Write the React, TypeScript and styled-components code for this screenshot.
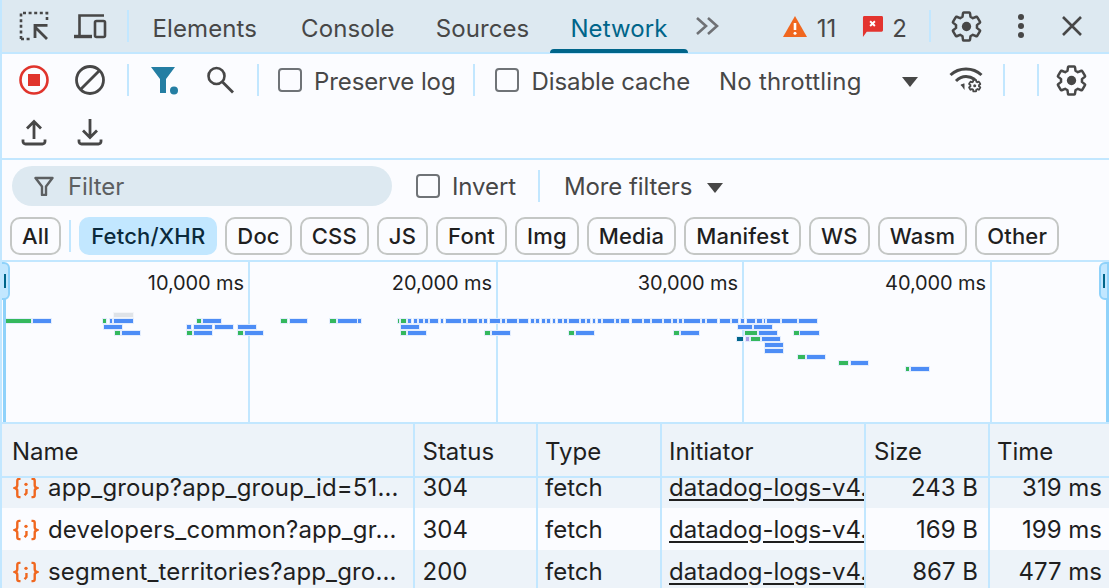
import React from "react";
import styled, { createGlobalStyle } from "styled-components";

const line = "#c2e7ff";
const tone = "#dde9f1";
const paper = "#fbfcff";
const ink = "#474747";

const Global = createGlobalStyle`
  html, body { margin: 0; padding: 0; width: 1109px; height: 588px; overflow: hidden; background: ${paper}; }
  * { box-sizing: border-box; }
`;

const Page = styled.div`
  width: 1109px; height: 588px; overflow: hidden; display: flex; flex-direction: column;
  border-left: 2px solid ${line}; background: ${paper};
  font-family: Inter, "Liberation Sans", sans-serif; font-size: 24px; color: ${ink};
`;
const TabBar = styled.div`
  height: 54px; flex: none; display: flex; align-items: stretch; background: ${tone};
  border-bottom: 2px solid ${line}; padding: 0 6px 0 4px;
`;
const IconSlot = styled.div<{ $w?: number; $ml?: number }>`
  width: ${p => p.$w ?? 56}px; flex: none; display: flex; align-items: center; justify-content: center;
  margin-left: ${p => p.$ml ?? 0}px;
`;
const Sep = styled.div<{ $l?: number; $r?: number }>`
  width: 2px; height: 32px; flex: none; align-self: center; background: ${line};
  margin-left: ${p => p.$l ?? 9}px; margin-right: ${p => p.$r ?? 7}px;
`;
const Tab = styled.div<{ $active?: boolean; $mr?: number }>`
  position: relative; display: flex; align-items: center; padding: 6px 20.5px 0; font-size: 24px; line-height: 28px; letter-spacing: .1px;
  margin-right: ${p => p.$mr ?? 0}px;
  color: ${p => (p.$active ? "#00658a" : ink)};
  ${p => p.$active && `&::after { content: ""; position: absolute; left: 0; right: 0; bottom: -1px; height: 4px; background: #00658a; border-radius: 4px 4px 0 0; }`}
`;
const StatusCount = styled.div<{ $l: number }>`
  display: flex; align-items: center; margin-left: ${p => p.$l}px; padding-top: 5px; line-height: 28px;
`;
const Spacer = styled.div`flex: 1;`;
const Toolbar = styled.div`
  height: 106px; flex: none; display: flex; flex-direction: column; border-bottom: 2px solid ${line}; padding-left: 4px;
`;
const ToolRow = styled.div`height: 52px; flex: none; display: flex; align-items: center;`;
const Check = styled.span<{ $l: number }>`
  width: 24px; height: 24px; flex: none; border: 2px solid #6f7377; border-radius: 4px; margin-left: ${p => p.$l}px; background: ${paper};
`;
const Label = styled.span<{ $l: number; $t?: number; $ls?: number }>`
  margin-left: ${p => p.$l}px; margin-top: ${p => p.$t ?? 0}px; line-height: 28px; white-space: nowrap; letter-spacing: ${p => p.$ls ?? -0.1}px;
`;
const Caret = styled.span<{ $l: number; $r?: number }>`
  width: 0; height: 0; margin-left: ${p => p.$l}px; margin-right: ${p => p.$r ?? 0}px; margin-top: 3px;
  border-left: 8px solid transparent; border-right: 8px solid transparent; border-top: 10px solid ${ink};
`;
const FilterSection = styled.div`
  height: 102px; flex: none; display: flex; flex-direction: column; border-bottom: 2px solid ${line};
`;
const FilterRow = styled.div`
  height: 53px; flex: none; display: flex; align-items: center; padding: 0 0 1px 10px;
`;
const Pill = styled.div`
  width: 380px; height: 40px; border-radius: 20px; background: ${tone}; display: flex; align-items: center; padding-left: 22px; gap: 14px; color: #5c5f61;
`;
const Chips = styled.div`
  flex: 1; display: flex; align-items: flex-start; gap: 8px; padding: 4px 0 0 8px;
`;
const Chip = styled.div<{ $on?: boolean }>`
  height: 38px; padding: 0 10px; display: flex; align-items: center; border-radius: 10px; font-size: 22px; font-weight: 500;
  letter-spacing: .18px; white-space: nowrap; line-height: 26px;
  border: 2px solid ${p => (p.$on ? line : "#c4c7c5")};
  background: ${p => (p.$on ? line : paper)}; color: ${p => (p.$on ? "#0a2a3c" : "#1f1f1f")};
`;
const ChipSep = styled.div`width: 2px; height: 32px; margin-top: 3px; background: ${line};`;
const Overview = styled.div`
  position: relative; height: 162px; flex: none; display: flex; border-bottom: 2px solid ${line}; overflow: hidden;
`;
const OverColumn = styled.div<{ $w: number; $end?: boolean }>`
  width: ${p => p.$w}px; flex: none; text-align: right; padding: 9px 4px 0 0; font-size: 20px; line-height: 24px; color: #1f1f1f; letter-spacing: -.1px;
  border-right: ${p => (p.$end ? "none" : `2px solid ${line}`)};
`;
const OverChart = styled.svg`position: absolute; left: 0; top: 0;`;
const Handle = styled.div<{ $side: "l" | "r" }>`
  position: absolute; top: 0; width: 10px; height: 38px; background: #c2e7ff; border: 2px solid #8fd2fa; display: flex; align-items: center; justify-content: center;
  ${p => p.$side === "l" ? "left: -2px; border-radius: 0 6px 6px 0;" : "right: 0; border-radius: 6px 0 0 6px;"}
  &::before { content: ""; width: 2px; height: 14px; background: #00658a; }
`;
const Rail = styled.div<{ $side: "l" | "r" }>`
  position: absolute; top: 36px; bottom: 0; width: 3px; background: #8fd2fa;
  ${p => (p.$side === "l" ? "left: 1px;" : "right: 0;")}
`;
const columns = "411px 123px 124px 204px 124px 1fr";
const HeadRow = styled.div`
  height: 54px; flex: none; display: grid; grid-template-columns: ${columns}; background: #edf3f9; border-bottom: 2px solid ${line}; position: relative; z-index: 1;
`;
const HeadCell = styled.div<{ $first?: boolean; $pl?: number }>`
  display: flex; align-items: center; padding: 4px 0 0 ${p => p.$pl ?? 7}px; color: #1f1f1f;
  border-left: ${p => (p.$first ? "none" : `2px solid ${line}`)}; line-height: 28px;
`;
const Body = styled.div`flex: 1; overflow: hidden;`;
const Rows = styled.div`margin-top: -12px;`;
const Row = styled.div<{ $odd: boolean }>`
  height: 42px; display: grid; grid-template-columns: ${columns}; background: ${p => (p.$odd ? "#edf3f9" : paper)}; color: #1f1f1f;
`;
const Cell = styled.div<{ $first?: boolean; $right?: boolean; $pr?: number; $pl?: number }>`
  display: flex; align-items: center; min-width: 0; overflow: hidden; white-space: nowrap;
  justify-content: ${p => (p.$right ? "flex-end" : "flex-start")};
  padding: 1px ${p => p.$pr ?? 0}px 0 ${p => p.$pl ?? (p.$first ? 11 : 7)}px; gap: 9px;
  border-left: ${p => (p.$first ? "none" : `2px solid ${line}`)};
`;
const RequestName = styled.span`letter-spacing: .15px;`;
const Link = styled.span`text-decoration: underline; text-underline-offset: 3px;`;

const Svg = ({ w, h, vb, children }: { w: number; h: number; vb?: string; children: React.ReactNode }) => (
  <svg width={w} height={h} viewBox={vb ?? `0 0 ${w} ${h}`} fill="none" stroke="none" style={{ display: "block", flex: "none" }}>{children}</svg>
);

const gearPath = "M19.14 12.94c.04-.3.06-.61.06-.94 0-.32-.02-.64-.07-.94l2.03-1.58c.18-.14.23-.41.12-.61l-1.92-3.32c-.12-.22-.37-.29-.59-.22l-2.39.96c-.5-.38-1.03-.7-1.62-.94l-.36-2.54c-.04-.24-.24-.41-.48-.41h-3.84c-.24 0-.43.17-.47.41l-.36 2.54c-.59.24-1.13.57-1.62.94l-2.39-.96c-.22-.08-.47 0-.59.22L2.74 8.87c-.12.21-.08.47.12.61l2.03 1.58c-.05.3-.09.63-.09.94s.02.64.07.94l-2.03 1.58c-.18.14-.23.41-.12.61l1.92 3.32c.12.22.37.29.59.22l2.39-.96c.5.38 1.03.7 1.62.94l.36 2.54c.05.24.24.41.48.41h3.84c.24 0 .44-.17.47-.41l.36-2.54c.59-.24 1.13-.56 1.62-.94l2.39.96c.22.08.47 0 .59-.22l1.92-3.32c.12-.22.07-.47-.12-.61l-2.01-1.58z";

const Gear = () => (
  <Svg w={35} h={35} vb="0 0 24 24">
    <path d={gearPath} stroke={ink} strokeWidth="1.7" strokeLinejoin="round" />
    <circle cx="12" cy="12" r="3.2" fill={ink} />
  </Svg>
);
const Inspect = () => (
  <Svg w={30} h={30}>
    <path d="M2 28V2H28V11M2 28H12" stroke={ink} strokeWidth="2.6" strokeDasharray="3 2.6" />
    <path d="M28 28 16 16M16 27V14.300H28.500" stroke={ink} strokeWidth="2.800" />
  </Svg>
);
const Device = () => (
  <Svg w={34} h={26}>
    <path d="M31 2.500H6.500V23" stroke={ink} strokeWidth="2.600" />
    <path d="M1 23.500h18" stroke={ink} strokeWidth="3.400" />
    <rect x="22" y="8" width="10" height="16" rx="1.500" stroke={ink} strokeWidth="2.600" />
  </Svg>
);
const Chevrons = () => (
  <Svg w={26} h={20}>
    <path d="M2 2l9 8-9 8M13 2l9 8-9 8" stroke="#6f7175" strokeWidth="2.600" />
  </Svg>
);
const Warn = () => (
  <Svg w={24} h={21}>
    <path d="M12 0 24 21H0z" fill="#f0671f" />
    <path d="M12 7v7" stroke="#fff" strokeWidth="2.600" />
    <circle cx="12" cy="17.200" r="1.500" fill="#fff" />
  </Svg>
);
const ErrorMsg = () => (
  <Svg w={21} h={21} vb="0 0 22 22">
    <path d="M1 1.500A1.500 1.500 0 0 1 2.500 0h18A1.500 1.500 0 0 1 22 1.500V15a1.500 1.500 0 0 1-1.500 1.500H5L1 22z" fill="#e3342f" />
    <path d="M8.500 5.500l5 5M13.500 5.500l-5 5" stroke="#fff" strokeWidth="2" />
  </Svg>
);
const Dots = () => (
  <Svg w={8} h={26}>
    <circle cx="4" cy="4" r="3" fill={ink} /><circle cx="4" cy="13" r="3" fill={ink} /><circle cx="4" cy="22" r="3" fill={ink} />
  </Svg>
);
const Close = () => (
  <Svg w={22} h={22}><path d="M2 2l18 18M20 2 2 20" stroke={ink} strokeWidth="2.600" /></Svg>
);
const Record = () => (
  <Svg w={32} h={32}>
    <circle cx="16" cy="16" r="13.500" stroke="#e0342c" strokeWidth="2.600" />
    <rect x="10" y="10" width="12" height="12" fill="#e0342c" />
  </Svg>
);
const Clear = () => (
  <Svg w={32} h={32}>
    <circle cx="16" cy="16" r="13.500" stroke={ink} strokeWidth="2.800" />
    <path d="M25.500 6.500 6.500 25.500" stroke={ink} strokeWidth="2.800" />
  </Svg>
);
const ActiveFunnel = () => (
  <Svg w={30} h={30}>
    <path d="M2 2h24l-9 12v14h-6V14z" fill="#247ea3" />
    <circle cx="25" cy="25.500" r="4" fill="#247ea3" />
  </Svg>
);
const Search = () => (
  <Svg w={30} h={30}>
    <circle cx="11.500" cy="11" r="8" stroke={ink} strokeWidth="2.600" />
    <path d="M17.500 17 28 27.500" stroke={ink} strokeWidth="2.800" />
  </Svg>
);
const Wifi = () => (
  <Svg w={34} h={28}>
    <path d="M1.500 9C10 1 24 1 32.500 9" stroke={ink} strokeWidth="3" />
    <path d="M7 15c3-3 7-4.500 10-4.500s6 1 9 3" stroke={ink} strokeWidth="3" />
    <path d="M13 20.500l-1.500-1.500c1-1 3-1.500 4-1.500V24z" fill={ink} />
    <g transform="translate(18.500 12.500) scale(.6)">
      <path d={gearPath} stroke={ink} strokeWidth="3" />
      <circle cx="12" cy="12" r="2.500" fill={ink} />
    </g>
  </Svg>
);
const Tray = () => (
  <path d="M2 21.500v2A2.500 2.500 0 0 0 4.500 26h17a2.500 2.500 0 0 0 2.500-2.500v-2" stroke={ink} strokeWidth="2.800" />
);
const Upload = () => (
  <Svg w={26} h={28}>
    <path d="M13 21V4M6 10.500l7-7 7 7" stroke={ink} strokeWidth="2.800" />
    <Tray />
  </Svg>
);
const Download = () => (
  <Svg w={26} h={28}>
    <path d="M13 1v18M6 12.500l7 7 7-7" stroke={ink} strokeWidth="2.800" />
    <Tray />
  </Svg>
);
const Funnel = () => (
  <Svg w={20} h={20}>
    <path d="M1.500 2h17l-6.500 8.500V19h-4v-8.500z" stroke="#5c5f61" strokeWidth="2.400" strokeLinejoin="round" />
  </Svg>
);
const JsonIcon = () => (
  <Svg w={26} h={22} vb="0 0 26 24">
    <path d="M7 2H5.500A2 2 0 0 0 3.500 4v5c0 1.500-1 2.500-2.500 3 1.500.5 2.500 1.500 2.500 3v5a2 2 0 0 0 2 2H7M19 2h1.500a2 2 0 0 1 2 2v5c0 1.500 1 2.500 2.500 3-1.500.5-2.500 1.500-2.500 3v5a2 2 0 0 1-2 2H19" stroke="#f0671f" strokeWidth="2.600" />
    <circle cx="13" cy="8" r="1.800" fill="#f0671f" />
    <path d="M13.500 13v4.500L11.500 20" stroke="#f0671f" strokeWidth="2.600" />
  </Svg>
);

type Bar = [number, number, number, string?];
const G = "#34b85d", B = "#4d8df6", T = "#00658a", L = "#dfe3e8", P = "#a99fe8";
const laneY = (n: number) => 315 + n * 6;
const dashes: [number, number][] = [[408,411],[414,417],[419,423],[425,428],[430,438],[441,443],[446,461],[463,466],[468,477],[479,482],[484,487],[490,500],[502,505],[507,517],[519,528],[531,534],[536,539],[542,545],[547,550],[553,555],[558,562],[564,567],[569,579],[581,585],[587,590],[593,595],[598,601],[603,614],[616,619],[621,629],[632,642],[644,650],[652,662],[664,671],[673,677],[679,682],[684,700],[702,705],[707,717],[720,730],[732,738],[741,744],[747,755],[757,762],[764,765],[767,780],[782,797],[799,817]];
const bars: Bar[] = [
  [0,114,133,L],
  [1,6,31,G],[1,33,51],[1,103,106,G],[1,110,112],[1,114,133],[1,197,201,G],[1,203,221],[1,281,287,G],[1,290,307],[1,330,336,G],[1,338,357],[1,358,361],[1,398,399,G],[1,401,406,G],
  ...dashes.map(([a, b]): Bar => [1, a, b]),
  [2,104,122],[2,187,191],[2,194,212],[2,215,233],[2,238,256],[2,401,419],[2,738,752],[2,754,772],
  [3,115,120,G],[3,122,140],[3,187,192,G],[3,194,212],[3,238,243,G],[3,245,263],[3,401,406,G],[3,408,426],[3,485,490,G],[3,492,510],[3,569,574,G],[3,576,594],[3,674,679,G],[3,681,699],[3,745,757,G],[3,759,777],[3,794,799,G],[3,800,819],
  [4,737,743,T],[4,746,749,P],[4,751,760,G],[4,762,780],
  [5,765,783],[6,765,783],
  [7,798,805,G],[7,807,825],
  [8,839,848,G],[8,851,868],
  [9,906,909,G],[9,911,929],
];

const ticks = [
  { w: 248, t: "10,000 ms" }, { w: 248, t: "20,000 ms" }, { w: 246, t: "30,000 ms" }, { w: 248, t: "40,000 ms" },
];
const chips = ["Doc", "CSS", "JS", "Font", "Img", "Media", "Manifest", "WS", "Wasm", "Other"];
const rows = [
  { n: "app_group?app_group_id=51...", s: "304", z: "243 B", t: "319 ms" },
  { n: "developers_common?app_gr...", s: "304", z: "169 B", t: "199 ms" },
  { n: "segment_territories?app_gro...", s: "200", z: "867 B", t: "477 ms" },
];

export default function App() {
  return (
    <Page>
      <Global />
      <TabBar>
        <IconSlot><Inspect /></IconSlot>
        <IconSlot><Device /></IconSlot>
        <Sep $r={3} />
        <Tab $mr={3}>Elements</Tab>
        <Tab>Console</Tab>
        <Tab>Sources</Tab>
        <Tab $active>Network</Tab>
        <IconSlot $w={40}><Chevrons /></IconSlot>
        <Spacer />
        <IconSlot $w={24}><Warn /></IconSlot>
        <StatusCount $l={10}>11</StatusCount>
        <IconSlot $w={46} $ml={13}><ErrorMsg /></IconSlot>
        <StatusCount $l={-3}>2</StatusCount>
        <Sep $l={22} $r={0} />
        <IconSlot $w={70}><Gear /></IconSlot>
        <IconSlot $w={40}><Dots /></IconSlot>
        <IconSlot $w={62}><Close /></IconSlot>
      </TabBar>
      <Toolbar>
        <ToolRow>
          <IconSlot><Record /></IconSlot>
          <IconSlot><Clear /></IconSlot>
          <Sep />
          <IconSlot><ActiveFunnel /></IconSlot>
          <IconSlot><Search /></IconSlot>
          <Sep $r={0} />
          <Check $l={19} />
          <Label $l={12} $t={3}>Preserve log</Label>
          <Sep $l={17} $r={0} />
          <Check $l={20} />
          <Label $l={13} $t={3}>Disable cache</Label>
          <Label $l={29} $t={3} $ls={0.2}>No throttling</Label>
          <Caret $l={40} $r={15} />
          <IconSlot $w={67}><Wifi /></IconSlot>
          <Sep $l={3} $r={32} />
          <Sep $l={0} $r={0} />
          <IconSlot $w={66}><Gear /></IconSlot>
        </ToolRow>
        <ToolRow>
          <IconSlot><Upload /></IconSlot>
          <IconSlot><Download /></IconSlot>
        </ToolRow>
      </Toolbar>
      <FilterSection>
        <FilterRow>
          <Pill><Funnel /><Label $l={0} $t={2}>Filter</Label></Pill>
          <Check $l={24} />
          <Label $l={12} $t={2}>Invert</Label>
          <Sep $l={22} $r={0} />
          <Label $l={24} $t={2}>More filters</Label>
          <Caret $l={15} />
        </FilterRow>
        <Chips>
          <Chip>All</Chip>
          <ChipSep />
          <Chip $on>Fetch/XHR</Chip>
          {chips.map(c => <Chip key={c}>{c}</Chip>)}
        </Chips>
      </FilterSection>
      <Overview>
        {ticks.map(t => <OverColumn key={t.t} $w={t.w}>{t.t}</OverColumn>)}
        <OverColumn $w={115} $end />
        <OverChart width="1107" height="160" viewBox="2 262 1107 160">
          {bars.map(([lane, a, b, color], i) => (
            <rect key={i} x={a - 1} y={laneY(lane) - 3} width={b - a + 2} height={6} fill={color === L ? "#f3f5f8" : "#e3edfd"} />
          ))}
          {bars.map(([lane, a, b, color], i) => (
            <rect key={i} x={a} y={laneY(lane) - 2} width={b - a} height={4} fill={color ?? B} />
          ))}
        </OverChart>
        <Rail $side="l" />
        <Rail $side="r" />
        <Handle $side="l" />
        <Handle $side="r" />
      </Overview>
      <HeadRow>
        <HeadCell $first $pl={10}>Name</HeadCell>
        <HeadCell $pl={7.5}>Status</HeadCell>
        <HeadCell>Type</HeadCell>
        <HeadCell>Initiator</HeadCell>
        <HeadCell $pl={8}>Size</HeadCell>
        <HeadCell>Time</HeadCell>
      </HeadRow>
      <Body>
        <Rows>
          {rows.map((r, i) => (
            <Row key={r.n} $odd={i % 2 === 0}>
              <Cell $first><JsonIcon /><RequestName>{r.n}</RequestName></Cell>
              <Cell $pl={7.5}>{r.s}</Cell>
              <Cell>fetch</Cell>
              <Cell><Link>datadog-logs-v4.</Link></Cell>
              <Cell $right $pr={10}>{r.z}</Cell>
              <Cell $right $pr={7}>{r.t}</Cell>
            </Row>
          ))}
        </Rows>
      </Body>
    </Page>
  );
}
